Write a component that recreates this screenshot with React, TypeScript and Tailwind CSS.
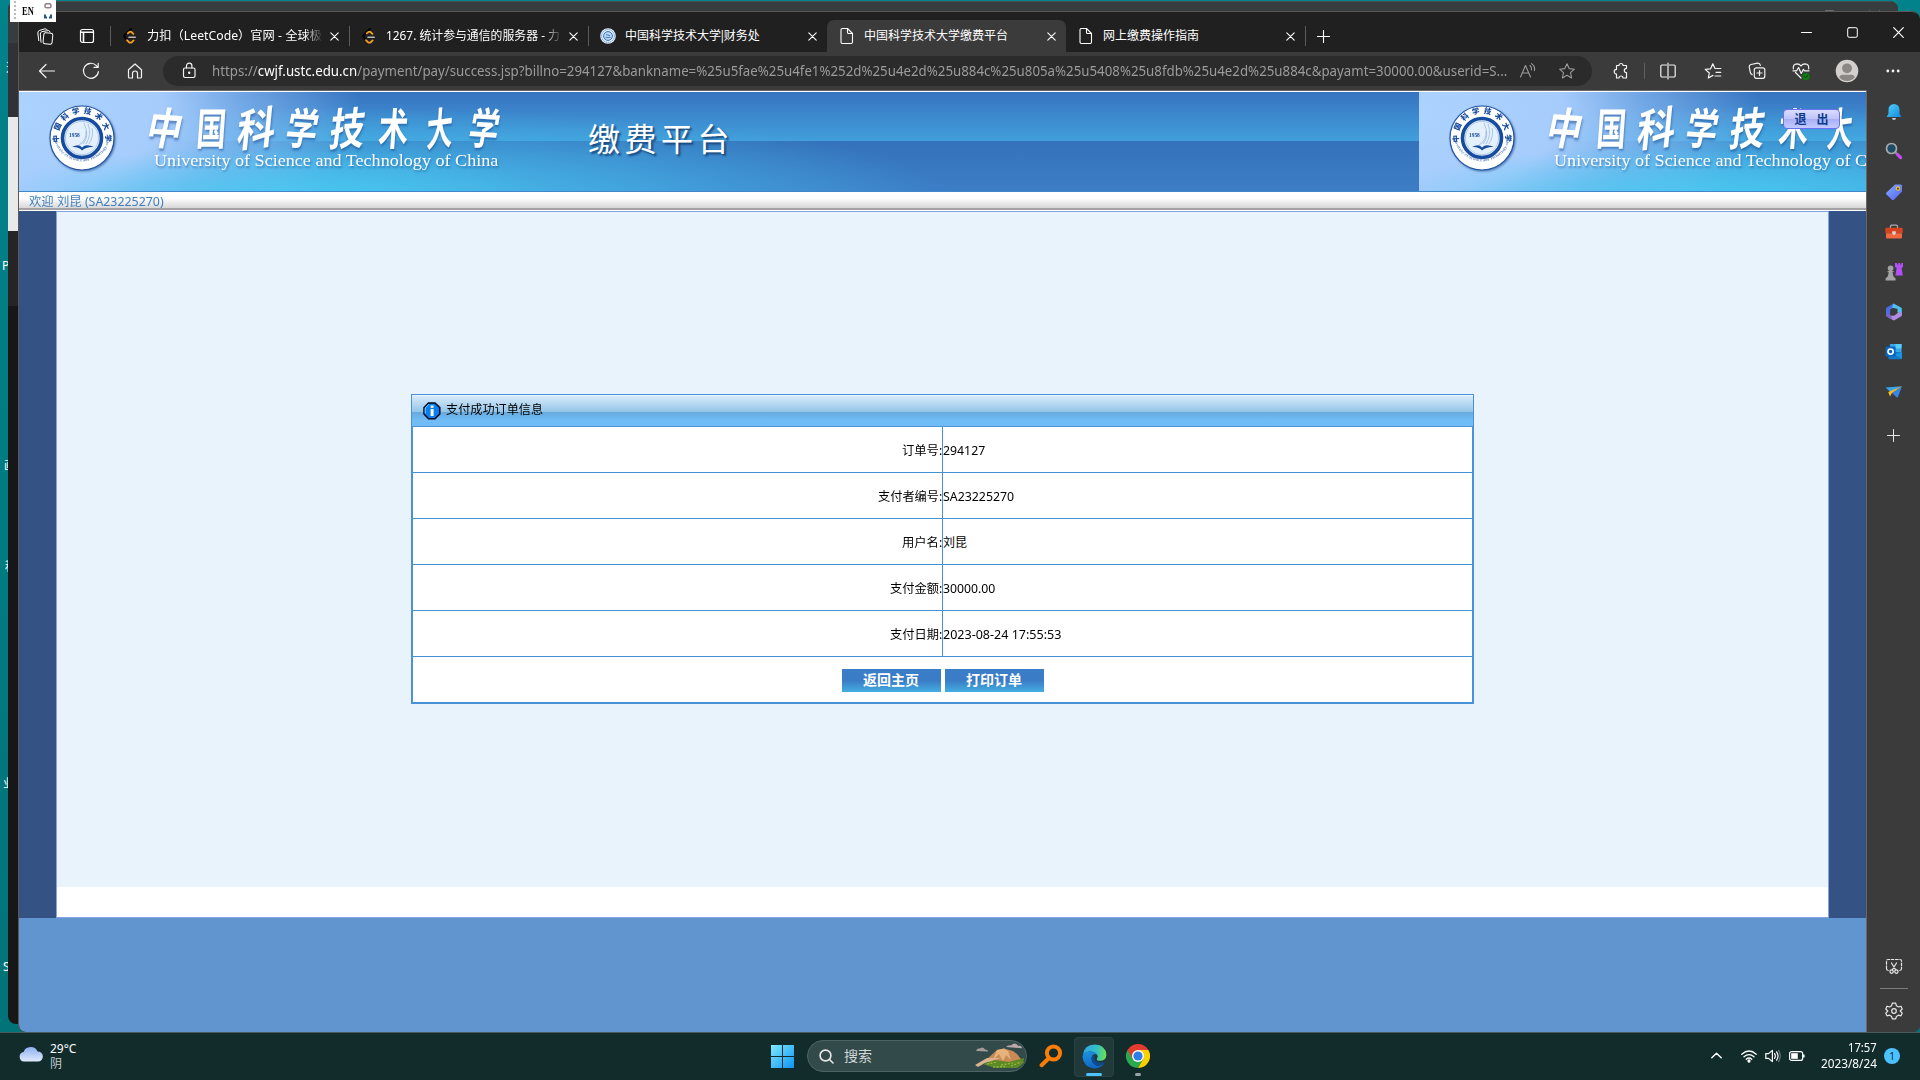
import React, { useLayoutEffect, useRef } from "react";

const ui = "font-['Noto_Sans','Noto_Sans_CJK_SC',sans-serif]";

/** Single-line text condensed or widened to an exact width. */
function Fit({ w, className = "", children }: { w: number; className?: string; children: React.ReactNode }) {
  const ref = useRef<HTMLSpanElement>(null);
  useLayoutEffect(() => {
    const el = ref.current;
    if (el && el.offsetWidth) el.style.transform = `scaleX(${w / el.offsetWidth})`;
  }, [w]);
  return (
    <span className={`inline-block shrink-0 text-left whitespace-nowrap ${className}`} style={{ width: w }}>
      <span ref={ref} className="inline-block origin-left whitespace-nowrap">
        {children}
      </span>
    </span>
  );
}

function Line({ size = 18, vb = 18, sw = 1, className = "", children }: { size?: number; vb?: number; sw?: number; className?: string; children: React.ReactNode }) {
  return (
    <svg width={size} height={size} viewBox={`0 0 ${vb} ${vb}`} fill="none" stroke="currentColor" strokeWidth={sw} strokeLinecap="round" strokeLinejoin="round" className={`shrink-0 ${className}`}>
      {children}
    </svg>
  );
}

const LeetIcon = () => (
  <svg width="16" height="16" viewBox="0 0 16 16" fill="none" strokeLinecap="round">
    <path d="M9 1 L2.8 7 Q1.8 8.2 2.8 9.4 L5 11.8" stroke="#050505" strokeWidth="2.2" />
    <path d="M5.8 5.4 L7.4 4 Q8.4 3.2 9.4 4 L11.4 5.8" stroke="#f5a01d" strokeWidth="1.8" />
    <path d="M5 12.2 L7 14.2 Q8.4 15.2 9.8 14.2 L11.6 12.4" stroke="#f5a01d" strokeWidth="1.8" />
    <path d="M7 9.2 H13.2" stroke="#b9b9b9" strokeWidth="1.6" />
  </svg>
);

const SealMini = () => (
  <svg width="16" height="16" viewBox="0 0 16 16">
    <circle cx="8" cy="8" r="7.8" fill="#e4effa" />
    <circle cx="8" cy="8" r="6.4" fill="none" stroke="#5b93d4" strokeDasharray="1.4 .8" />
    <circle cx="8" cy="8" r="4.4" fill="#bcd7f2" stroke="#2f72c0" strokeWidth="1" />
    <path d="M5.5 9.6 Q7 8.8 8 9.8 Q9 8.8 10.6 9.6 M6 6.6 L10 7.6" stroke="#2f72c0" strokeWidth=".9" fill="none" />
  </svg>
);

const PageIcon = () => (
  <Line size={16} vb={16} sw={1.1} className="text-white">
    <path d="M2 2 a1.5 1.5 0 0 1 1.5 -1.5 H8.5 L13.5 5.5 V14 a1.5 1.5 0 0 1 -1.5 1.5 H3.5 A1.5 1.5 0 0 1 2 14 Z M8.5 .5 V4.5 a1 1 0 0 0 1 1 H13.5" />
  </Line>
);

const tabs = [
  { icon: <LeetIcon />, text: "力扣（LeetCode）官网 - 全球极客", w: 187, fade: true },
  { icon: <LeetIcon />, text: "1267. 统计参与通信的服务器 - 力", w: 174, fade: true },
  { icon: <SealMini />, text: <>中国科学技术大学<span className="-mx-[2px]">|</span>财务处</>, w: 135 },
  { icon: <PageIcon />, text: "中国科学技术大学缴费平台", w: 144, active: true },
  { icon: <PageIcon />, text: "网上缴费操作指南", w: 96 },
];

function TabStrip() {
  return (
    <div className="flex h-[40px] shrink-0 bg-[#202020] text-white">
      <div className="flex w-[91px] items-center pt-[8px] pl-[18px]">
        <Line size={17} vb={17}>
          <rect x="6.5" y="5" width="9" height="11" rx="1.8" transform="rotate(6 11 10)" />
          <path d="M4 14.2 L3.3 6 Q3.3 4.2 5 3.6 L11.5 2.6 Q12.8 2.8 13 4 M1.8 12.6 L.8 5 Q.8 3 2.6 2.4 L8 .8 Q9.6 .8 10.2 1.8" />
        </Line>
        <Line size={16} vb={16} className="ml-[25px]" sw={1.2}>
          <rect x="1.5" y="1.5" width="13" height="13" rx="2" />
          <path d="M2 4.2 H14 M4.5 5 V14" strokeWidth="1.6" />
        </Line>
      </div>
      {tabs.map((t, i) => (
        <div key={i} className={`relative flex h-[32px] w-[239px] items-center self-end ${t.active ? "rounded-t-[7px] bg-[#3b3b3b]" : ""}`}>
          {!t.active && i < 4 && <i className="absolute top-[6px] left-0 h-[20px] w-px bg-[#5c5c5c]" />}
          <span className="ml-[12px]">{t.icon}</span>
          <span className={`ml-[9px] flex h-[20px] w-[175px] items-center overflow-hidden text-[12px] leading-[20px] ${t.fade ? "[mask-image:linear-gradient(90deg,#000_158px,transparent_176px)]" : ""}`}>
            <Fit w={t.w}>{t.text}</Fit>
          </span>
          <Line size={9} vb={9} className="ml-[8px]" sw={1.1}>
            <path d="M.8 .8 L8.2 8.2 M8.2 .8 L.8 8.2" />
          </Line>
        </div>
      ))}
      <div className="mt-[8px] flex h-[32px] w-[60px] items-center">
        <i className="h-[20px] w-px bg-[#5c5c5c]" />
        <Line size={13} vb={13} className="ml-[11px]" sw={1.1}>
          <path d="M6.5 .5 V12.5 M.5 6.5 H12.5" />
        </Line>
      </div>
      <div className="ml-auto flex h-[40px] items-center pr-[16px]">
        <Line size={11} vb={11} className="mr-[35px]"><path d="M.5 5.5 H10.5" /></Line>
        <Line size={11} vb={11} className="mr-[35px]"><rect x=".7" y=".7" width="9.6" height="9.6" rx="1.4" /></Line>
        <Line size={11} vb={11} sw={1.2}><path d="M.7 .7 L10.3 10.3 M10.3 .7 L.7 10.3" /></Line>
      </div>
    </div>
  );
}

function Toolbar() {
  return (
    <div className="flex h-[38px] shrink-0 items-center bg-[#3b3b3b] text-[#f2f2f2]">
      <Line className="ml-[19px]" sw={1.2}><path d="M1.5 9 H16.5 M8 2.5 L1.5 9 L8 15.5" /></Line>
      <Line className="ml-[26px]" sw={1.2}><path d="M16.4 9.6 A7.5 7.5 0 1 1 14.4 3.6 L16 5.3 M16.2 1.3 V5.4 H12" /></Line>
      <Line className="ml-[26px]" sw={1.2}><path d="M2.5 7.8 L9 2 L15.5 7.8 V15 a1 1 0 0 1 -1 1 H11.5 V11.5 a2.5 2.5 0 0 0 -5 0 V16 H3.5 a1 1 0 0 1 -1 -1 Z" /></Line>
      <div className="ml-[19px] flex h-[30px] w-[1429px] items-center rounded-full bg-[#2b2b2b]">
        <Line className="ml-[17px]" sw={1.2}>
          <rect x="3.5" y="6" width="11.5" height="9.5" rx="1.4" />
          <path d="M6.5 6 V3.8 a2.7 2.7 0 0 1 5.4 0 V6" />
          <circle cx="9.2" cy="10.8" r=".6" fill="currentColor" />
        </Line>
        <span className="ml-[14px] text-[14px] leading-[20px] text-[#9b9b9b]">
          <Fit w={1295}>
            https://<span className="text-white">cwjf.ustc.edu.cn</span>
            /payment/pay/success.jsp?billno=294127&amp;bankname=%25u5fae%25u4fe1%252d%25u4e2d%25u884c%25u805a%25u5408%25u8fdb%25u4e2d%25u884c&amp;payamt=30000.00&amp;userid=S...
          </Fit>
        </span>
        <Line className="ml-[12px] text-[#9b9b9b]" sw={1.1}>
          <path d="M1.5 15 L6.5 3.5 L11.5 15 M3.2 11 H9.8 M11 3.5 Q12.8 5 12.4 8 M12.6 1.6 Q16.4 4 15.4 8.6" />
        </Line>
        <Line className="ml-[21px] text-[#9b9b9b]" sw={1.1}>
          <path d="M9 1.8 L11.2 6.6 L16.4 7.2 L12.5 10.7 L13.6 16 L9 13.3 L4.4 16 L5.5 10.7 L1.6 7.2 L6.8 6.6 Z" />
        </Line>
      </div>
      <Line className="ml-[20px]" sw={1.2}>
        <path d="M4.5 3.5 H7 a2 2 0 0 1 4 0 H14.5 V6.3 a2 2 0 0 0 0 4.4 V16 H11 a2 2 0 0 0 -4 0 H4.5 V12 a2.3 2.3 0 1 1 0 -4.6 Z" />
      </Line>
      <i className="ml-[14px] h-[16px] w-px bg-[#5f5f5f]" />
      <Line className="ml-[14px]" sw={1.2}><path d="M7.5 3 H3 a1.2 1.2 0 0 0 -1.2 1.2 V13.8 A1.2 1.2 0 0 0 3 15 H7.5 M10.5 3 H15 a1.2 1.2 0 0 1 1.2 1.2 V13.8 A1.2 1.2 0 0 1 15 15 H10.5 M9 1 V17" /></Line>
      <Line className="ml-[27px]" sw={1.2}><path d="M9 13.4 L4.3 16 L5.3 11 L1.2 7.4 L6.6 6.8 L8.8 1.8 L11 6.5 H16.8 M12 10.3 H16.8 M11 14 H16.8" /></Line>
      <Line className="ml-[26px]" sw={1.2}>
        <rect x="6.3" y="5.8" width="10.5" height="10.5" rx="2" />
        <path d="M11.5 8.5 V13.5 M9 11 H14 M4.2 12.6 Q2.6 12 2.3 10.4 L1.2 5 Q1 3 3 2.5 L9.5 1.2 Q11.8 1 12.4 3.4" />
      </Line>
      <Line className="ml-[26px]" sw={1.2}>
        <path d="M1.3 6.8 Q.8 2 5 1.8 Q7.6 1.8 9 4 Q10.4 1.8 13 1.8 Q17.2 2 16.7 6.8 M3.5 10.5 L9 16 M1 8.8 H4.6 L6.6 5.5 L9.2 11.5 L11.4 7.4 L12.6 8.8 H17" />
        <circle cx="14" cy="14.5" r="3.6" fill="#0f7b10" stroke="none" />
        <path d="M12.4 14.6 L13.6 15.8 L15.8 13.4" stroke="#053a05" strokeWidth="1" />
      </Line>
      <svg width="24" height="24" viewBox="0 0 24 24" className="ml-[25px] shrink-0">
        <circle cx="12" cy="12" r="11.3" fill="#d3d0cd" />
        <circle cx="12" cy="9.3" r="4.9" fill="#8b8886" />
        <path d="M4.3 18.5 Q4.6 15.8 7.5 15.8 H16.5 Q19.4 15.8 19.7 18.5 A10.3 10.3 0 0 1 4.3 18.5Z" fill="#8b8886" />
      </svg>
      <svg width="14" height="4" viewBox="0 0 14 4" fill="#f2f2f2" className="ml-[27px] shrink-0">
        <circle cx="1.8" cy="2" r="1.4" /><circle cx="7" cy="2" r="1.4" /><circle cx="12.2" cy="2" r="1.4" />
      </svg>
    </div>
  );
}

function Seal({ id }: { id: string }) {
  return (
    <svg width="68" height="68" viewBox="0 0 68 68" className="shrink-0 drop-shadow-[1px_1px_1px_rgba(20,60,120,.6)]">
      <defs>
        <path id={`${id}t`} d="M11.5 40 A23.6 23.6 0 1 1 56.5 40" />
        <path id={`${id}b`} d="M5.6 32 A28.6 28.6 0 0 0 62.4 32" />
      </defs>
      <circle cx="34" cy="34" r="32" fill="#fff" stroke="#2355a5" strokeWidth="1.2" />
      <circle cx="34" cy="34" r="19.5" fill="#e9f3fd" stroke="#174ba0" strokeWidth="3.6" />
      <circle cx="34" cy="34" r="16.6" fill="#e4f0fc" stroke="#9dbfe8" strokeWidth=".8" />
      <text fontSize="7.4" fontWeight="900" fill="#174ba0" fontFamily="'Noto Sans CJK SC', sans-serif">
        <textPath href={`#${id}t`} textLength="84" startOffset="2">中国科学技术大学</textPath>
      </text>
      <text fontSize="4.2" fill="#174ba0" fontFamily="'Liberation Serif', serif">
        <textPath href={`#${id}b`} textLength="86" startOffset="2">University of Science and Technology of China</textPath>
      </text>
      <text x="21" y="33" fontSize="5.4" fontWeight="700" fill="#174ba0" fontFamily="'Liberation Serif', serif">1958</text>
      <path d="M24 43 Q31 39.5 34 43.5 Q38 39.5 46 43 Q38 42.5 34 46.5 Q31 42.5 24 43Z" fill="#174ba0" />
      <path d="M35 40 Q42 32 36 19 M38 40 Q44 31 40 20 M41 40 Q46 32 44 24 M31 41 Q39 36 38 27" fill="none" stroke="#8fb2dd" strokeWidth=".7" />
    </svg>
  );
}

const brush = [
  { c: "中", t: "-skew-x-12 rotate-3 scale-x-100" },
  { c: "国", t: "-skew-x-6 scale-x-85" },
  { c: "科", t: "-skew-x-12 -rotate-6 scale-x-110" },
  { c: "学", t: "-skew-x-12 rotate-3 scale-x-90" },
  { c: "技", t: "-skew-x-12 -rotate-3 scale-x-100" },
  { c: "术", t: "-skew-x-6 scale-x-85" },
  { c: "大", t: "-skew-x-12 -rotate-6 scale-x-75" },
  { c: "学", t: "-skew-x-12 rotate-3 scale-x-85" },
];

function Banner({ id }: { id: string }) {
  return (
    <div className="relative flex h-[99px] w-[1400px] shrink-0 bg-[linear-gradient(180deg,#3873c0_0,#419fdb_49px,#3473bb_49px,#3c7dc6_99px)]">
      <div className="absolute inset-0 bg-[radial-gradient(ellipse_640px_95px_at_300px_110px,#47c2ee_0,#45b3e6cc_45%,#3f95d800_100%)]" />
      <div className="absolute inset-0 bg-[radial-gradient(ellipse_340px_190px_at_0_20px,#acd2ff_0,#a6ccfc_42%,#8dbdf5b0_65%,#5a9be000_100%)]" />
      <div className="absolute inset-0 bg-[radial-gradient(ellipse_280px_50px_at_250px_105px,#4ac8f0cc_0,#4ac8f000_100%)]" />
      <div className="relative flex w-full">
        <div className="mt-[12px] ml-[29px]"><Seal id={id} /></div>
        <div className="ml-[32px] w-[366px] text-white [text-shadow:1px_2px_2px_rgba(30,80,150,.55)]">
          <div className="mt-[9px] -ml-[5px] flex h-[50px] origin-center scale-y-125 items-center font-['Noto_Sans_CJK_SC',sans-serif] text-[35px] leading-[50px] font-bold">
            {brush.map(({ c, t }, i) => (
              <span key={i} className={`w-[45.6px] shrink-0 text-center ${t}`}>{c}</span>
            ))}
          </div>
          <div className="ml-[6px] font-['Liberation_Serif',serif] text-[17px] leading-[20px]">
            <Fit w={344}>University of Science and Technology of China</Fit>
          </div>
        </div>
        <div className="mt-[21px] ml-[74px] font-['Noto_Sans_CJK_SC',sans-serif] text-[32px] leading-[48px] tracking-[4.5px] text-white [text-shadow:2px_2px_2px_rgba(15,50,100,.8)]">缴费平台</div>
      </div>
    </div>
  );
}

const rows = [
  ["订单号:", 40, "294127", 42],
  ["支付者编号:", 64, "SA23225270", 71],
  ["用户名:", 40, "刘昆", 24],
  ["支付金额:", 52, "30000.00", 52],
  ["支付日期:", 52, "2023-08-24 17:55:53", 118],
] as const;

function OrderTable() {
  return (
    <div className="flex w-[1063px] flex-col self-start border border-[#4a90d9] text-[12px] text-black">
      <div className="flex h-[31px] items-center border-t border-[#eaf5fe] bg-[linear-gradient(180deg,#d6eafa_0,#93c5e8_16px,#68aadc_16px,#70bcf7_24px,#70bcf7_100%)] pl-[11px]">
        <svg width="18" height="18" viewBox="0 0 18 18">
          <path d="M5.5 1 H12 L16.8 5.5 V12 L12 16.8 H5.5 L1 12 V5.5Z" fill="#0a7df0" stroke="#00081c" strokeWidth="1.5" />
          <path d="M6 2.2 L2.2 6 V11.5" stroke="#8fd0ff" fill="none" />
          <path d="M7.6 3.4h3v2.4h-3z M7.6 7h3v7h-3z" fill="#fff" />
        </svg>
        <span className="-mt-[2px] ml-[5px]"><Fit w={97}>支付成功订单信息</Fit></span>
      </div>
      <div className="flex flex-col border border-[#4a94d8] bg-white">
        {rows.map(([k, kw, v, vw]) => (
          <div key={k} className="flex h-[46px] items-stretch border-b border-[#4492d3] leading-[47px]">
            <div className="w-[530px] border-r border-[#4492d3] text-right"><Fit w={kw}>{k}</Fit></div>
            <div className="flex-1"><Fit w={vw}>{v}</Fit></div>
          </div>
        ))}
        <div className="flex h-[45px] justify-center gap-[4px] pt-[12px]">
          {["返回主页", "打印订单"].map((b) => (
            <button key={b} className="h-[23px] w-[99px] bg-[linear-gradient(180deg,#3a7dc8_0,#3a7cc6_50%,#43aee2_100%)] pb-px text-center text-[14px] leading-[20px] font-bold text-white">{b}</button>
          ))}
        </div>
      </div>
    </div>
  );
}

function WebPage() {
  return (
    <div className="flex w-[1848px] shrink-0 flex-col overflow-hidden rounded-bl-[7px] border-r border-[#6b6663] bg-[#6195cf]">
      <div className="h-px shrink-0 bg-[#6b6663]" />
      <div className="h-px shrink-0 bg-white" />
      <div className="relative flex h-[99px] shrink-0 overflow-hidden">
        <Banner id="a" />
        <Banner id="b" />
        <div className="absolute top-[17px] left-[1764px] flex h-[20px] w-[57px] items-center justify-center gap-[10px] rounded-[4px] border border-[#6a70f0] bg-[linear-gradient(180deg,#d9dcff_0,#bfc3fa_50%,#a9aff5_50%,#c3caff_100%)] font-['Noto_Sans_CJK_SC',sans-serif] text-[12px] font-bold text-[#0b3a8f]">
          <span>退</span><span>出</span>
        </div>
      </div>
      <div className="flex h-[19px] shrink-0 items-center border-t border-b-2 border-t-[#3f86cd] border-b-[#a3a3a3] bg-[linear-gradient(180deg,#fff_0,#fdfdfd_40%,#d8d8d8_100%)] pt-[3px] pl-[10px] text-[12px] leading-[14px] text-[#3f7fc0]">
        <Fit w={135}>欢迎 刘昆 (SA23225270)</Fit>
      </div>
      <div className="h-px shrink-0 bg-white" />
      <div className="flex h-[707px] shrink-0 bg-[#345384]">
        <div className="ml-[37px] flex w-[1773px] flex-col border border-[#86a3e4] bg-white">
          <div className="flex h-[675px] justify-center bg-[#e8f3fc] pt-[182px]"><OrderTable /></div>
        </div>
      </div>
    </div>
  );
}

const sideIcons = [
  <svg key="bell" width="18" height="18" viewBox="0 0 18 18"><defs><linearGradient id="bl" x1="0" y1="0" x2="1" y2="1"><stop stopColor="#4fd4fb" /><stop offset="1" stopColor="#1487dc" /></linearGradient></defs><path d="M9 1 a5.5 5.5 0 0 1 5.5 5.5 V10.5 L16.3 14 H1.7 L3.5 10.5 V6.5 A5.5 5.5 0 0 1 9 1Z" fill="url(#bl)" /><path d="M7 15 h4 a2 2 0 0 1 -4 0" fill="#c8c8c8" /></svg>,
  <svg key="find" width="18" height="18" viewBox="0 0 18 18" className="-mt-[2px]"><circle cx="6.5" cy="6.5" r="5" fill="#1d4d66" stroke="#aaa" strokeWidth="1.7" /><path d="M10.5 10.5 L12 12" stroke="#999" strokeWidth="2" /><path d="M12.4 12.4 L15.6 15.6" stroke="#c44df5" strokeWidth="3.2" strokeLinecap="round" /></svg>,
  <svg key="tag" width="18" height="18" viewBox="0 0 18 18"><defs><linearGradient id="tg" x1="0" y1="0" x2="1" y2="1"><stop stopColor="#7fb2ff" /><stop offset="1" stopColor="#5a5cf0" /></linearGradient></defs><path d="M10 1.5 H16 L17 2.5 V8.5 L9 16.8 Q8 17.5 7 16.8 L1.5 11.5 Q.6 10.4 1.5 9.4Z" fill="url(#tg)" /><circle cx="13" cy="5.6" r="1.7" fill="#4b4a5c" stroke="#f0c419" strokeWidth="1.1" /></svg>,
  <svg key="box" width="18" height="18" viewBox="0 0 18 18"><path d="M5.5 5 V3.4 Q5.5 2.2 6.8 2.2 H11.2 Q12.5 2.2 12.5 3.4 V5" fill="none" stroke="#aaa" strokeWidth="1.3" /><rect x=".3" y="4.8" width="17.4" height="5.4" rx="1" fill="#d8431f" /><path d="M1 10.2 H17 V14.6 Q17 15.6 16 15.6 H2 Q1 15.6 1 14.6Z" fill="#f1683f" /><path d="M7.2 8.3 h3.6 v2.4 L9 12.3 L7.2 10.7Z" fill="#d5d5d5" /></svg>,
  <svg key="chess" width="18" height="18" viewBox="0 0 18 18"><path d="M10 0 h2 v1.5 h1.2 V0 h1.8 v1.5 h1.2 V0 H18 V4 L16.6 5 L17.8 12.5 H10.4 L11.6 5 L10 4Z" fill="#b24ff5" /><circle cx="5.6" cy="5.3" r="2.8" fill="#a3a3a3" /><path d="M2.6 8 H8.6 V9.3 H7.4 L8.4 13.3 L10.6 15.5 V17.5 H.6 V15.5 L2.8 13.3 L3.8 9.3 H2.6Z" fill="#a3a3a3" /></svg>,
  <svg key="m365" width="18" height="18" viewBox="0 0 18 18"><path d="M8.5 .5 L1 5 V13 L5 15.4 L5.2 6.5 L12 3Z" fill="#4a6ee0" /><path d="M8.5 .5 L16.8 5 V12 L12.4 9.2 L12.6 6 L7 4.6Z" fill="#4fc0ee" /><path d="M16.8 9.5 V13 L9 17.6 L4.5 15.2 L2.4 13 L9.5 12.6 L14 9Z" fill="#b08be0" /><path d="M1 10 V13 L7 16.6 L6 12.3Z" fill="#7b63c9" /></svg>,
  <svg key="ol" width="18" height="18" viewBox="0 0 18 18"><rect x="5" y="1" width="11.5" height="9" fill="#37a9ea" /><path d="M10.5 1 h6 v4.5 h-6z" fill="#56d0fb" /><path d="M3.5 9 H17 V15 Q17 16.2 15.8 16.2 H4.7 Q3.5 16.2 3.5 15Z" fill="#1479c9" /><path d="M17 9 V16 L9.5 11.5Z" fill="#1b93e0" /><rect x=".6" y="3.6" width="10" height="10" rx="1" fill="#0a66bd" /><circle cx="5.6" cy="8.6" r="2.6" fill="none" stroke="#fff" strokeWidth="1.6" /></svg>,
  <svg key="drop" width="18" height="18" viewBox="0 0 18 18"><path d="M.5 4.6 L17 3.3 L5.5 9Z" fill="#35a5ee" /><path d="M17 3.3 L12.5 15 L7 10Z" fill="#3585ec" /><path d="M17 3.3 L3.2 9 L5 13.4 L7 10Z" fill="#f8bd1c" /></svg>,
];

function Sidebar() {
  return (
    <div className="flex flex-1 flex-col items-center bg-[#3b3b3b] pt-[2px] text-[#e6e6e6]">
      {sideIcons.map((s, i) => (
        <div key={i} className="flex h-[40px] items-center">{s}</div>
      ))}
      <div className="flex h-[46px] items-center"><Line size={13} vb={13}><path d="M6.5 .5 V12.5 M.5 6.5 H12.5" /></Line></div>
      <div className="mt-auto flex flex-col items-center">
        <Line size={18} sw={1.2}>
          <path d="M1.5 11.5 V4 Q1.5 2.5 3 2.5 H15 Q16.5 2.5 16.5 4 V11.5 M1.5 11.5 Q1.5 13.5 3.5 13.5 M16.5 11.5 Q16.5 13.5 14.5 13.5" strokeDasharray="2.6 1.7" />
          <path d="M6.5 6 L10.8 13 M11.5 6 L7.2 13" />
          <circle cx="6.6" cy="14.6" r="1.7" /><circle cx="11.4" cy="14.6" r="1.7" />
        </Line>
        <i className="mt-[13px] h-px w-[28px] bg-[#7c7c7c]" />
        <Line size={18} sw={1.2} className="mt-[13px] mb-[12px]">
          <path d="M7.3 1.2 H10.7 L11.4 3.8 L13.6 5 L16 4.2 L17.2 7 L15.2 9 L17.2 11.2 L16 13.8 L13.4 13.2 L11.4 14.4 L10.7 16.8 H7.3 L6.6 14.4 L4.6 13.2 L2 13.8 L.8 11.2 L2.8 9 L.8 7 L2 4.2 L4.6 5 L6.6 3.8Z" />
          <circle cx="9" cy="9" r="2.3" />
        </Line>
      </div>
    </div>
  );
}

const EdgeIcon = () => (
  <svg width="25" height="25" viewBox="0 0 25 25" className="-mt-px">
    <defs>
      <linearGradient id="e1" x1="0" y1=".4" x2="1" y2=".5"><stop stopColor="#2aa6e8" /><stop offset=".6" stopColor="#35c1c0" /><stop offset="1" stopColor="#6be34d" /></linearGradient>
      <linearGradient id="e2" x1="0" y1="0" x2=".4" y2="1"><stop stopColor="#1c95e0" /><stop offset="1" stopColor="#1066c4" /></linearGradient>
    </defs>
    <path d="M.8 11 Q2 .6 12.8 .5 Q24 1 24.4 11 Q24 16.8 18 16.8 Q13.8 16.6 15 14.4 Q16.6 12.6 15 10.6 Q12 7 7 7.6 Q3 8 .8 11Z" fill="url(#e1)" />
    <path d="M.5 12.5 Q2 7.6 7.6 7.5 Q12.6 7.3 15 10.6 Q10.8 9.4 9.6 13.5 Q9 19 14.5 21.5 Q18.5 22.8 22.6 19 Q18.6 25 11.6 24.4 Q1.4 23 .5 12.5Z" fill="url(#e2)" />
    <path d="M9.6 13.5 Q8.8 19 14.5 21.5 Q18.8 22.8 22.8 18.6 Q23 17.6 22 18 Q18.5 19.6 15 18 Q11.4 16 12.6 11.6 Q10.4 11.4 9.6 13.5Z" fill="#0c4a94" />
  </svg>
);

const ChromeIcon = () => (
  <svg width="24" height="24" viewBox="0 0 24 24" className="-mt-px">
    <path d="M12 12 L1.6 6 A12 12 0 0 0 12 24 L17.2 15Z" fill="#2da94f" />
    <path d="M12 12 L17.2 15 L12 24 A12 12 0 0 0 22.4 6 H12Z" fill="#fdd000" />
    <path d="M12 6 H22.4 A12 12 0 0 0 1.6 6 L6.8 15 Z" fill="#e33b2e" />
    <circle cx="12" cy="12" r="6" fill="#fff" />
    <circle cx="12" cy="12" r="4.6" fill="#2f7de9" />
  </svg>
);

function Taskbar() {
  return (
    <div className="absolute inset-x-0 bottom-0 flex h-[48px] items-center border-t border-[#4a5a5a] bg-[#122c2c] text-white">
      <div className="flex w-[771px] items-center pl-[19px]">
        <svg width="24" height="16" viewBox="0 0 24 16" className="-mt-[6px]">
          <defs><linearGradient id="cl" x1="0" y1="0" x2="0" y2="1"><stop stopColor="#8eb0f2" /><stop offset="1" stopColor="#dfe9fb" /></linearGradient></defs>
          <path d="M5 15.5 A4.8 4.8 0 0 1 4.6 6 A7.6 7.6 0 0 1 18.6 5.4 A5 5 0 0 1 19 15.5Z" fill="url(#cl)" />
        </svg>
        <div className="-mt-[2px] ml-[7px] flex flex-col text-[12px] leading-[15px]"><Fit w={26}>29°C</Fit><span className="text-[#c4cdcd]">阴</span></div>
      </div>
      <svg width="23" height="23" viewBox="0 0 23 23">
        <defs><linearGradient id="wn" x1="0" y1="0" x2="1" y2="1"><stop stopColor="#7eeaff" /><stop offset="1" stopColor="#0f92f5" /></linearGradient></defs>
        <path d="M0 0h11v11H0z M12 0h11v11H12z M0 12h11v11H0z M12 12h11v11H12z" fill="url(#wn)" />
      </svg>
      <div className="-mt-px ml-[13px] flex h-[32px] w-[220px] items-center rounded-full border border-[#4f6363] bg-[#334a4a] pr-px pl-[11px]">
        <Line size={15} vb={15} sw={1.6} className="text-[#e8e8e8]"><circle cx="6.5" cy="6.5" r="5.4" /><path d="M10.5 10.5 L14 14" /></Line>
        <span className="-mt-px ml-[10px] text-[14px] leading-[20px] text-[#d0d7d7]">搜索</span>
        <svg width="50" height="26" viewBox="0 0 50 26" className="ml-auto">
          <path d="M1 8 q1-3 4-2.6 q3-2.4 5 1 q3 0 3 2z" fill="#a79a9c" />
          <path d="M31 4 q2-2.4 5-1.6 q4-4 7 .4 q4-.6 4 2.4z" fill="#b9a9a8" />
          <path d="M12 16 L22 7 L29 5.5 L38 8 L42 11 L49 20 L35 22 L15 20Z" fill="#c98a55" />
          <path d="M22 7 L29 5.5 L33 8 L36 17 L31 12 L28 18 L24 11 L18 17Z" fill="#e7b37d" />
          <path d="M0 22 L12 15 L26 15 L10 20 L3 24Z" fill="#d9b48c" />
          <path d="M8 21 L20 17 L34 19 L49 15 Q49 22 42 25 H20Z" fill="#5c8a26" />
          <path d="M12 21 L22 19 M26 22 L38 20 M18 24 L30 23.6 M36 23 L46 19" stroke="#a3b93a" strokeWidth="1.2" strokeDasharray="2 1.5" />
        </svg>
      </div>
      <svg width="24" height="24" viewBox="0 0 24 24" className="-mt-px ml-[12px]"><circle cx="14.5" cy="9" r="6.6" fill="none" stroke="#fb7d08" strokeWidth="4" /><path d="M9.5 14.5 L2.6 21.2" stroke="#fb7d08" strokeWidth="4" strokeLinecap="round" /></svg>
      <div className="relative ml-[11px] flex h-[40px] w-[40px] items-center justify-center rounded-[4px] border border-[#2a4242] bg-[#213939]">
        <EdgeIcon />
        <i className="absolute bottom-0 left-[11px] h-[3px] w-[16px] rounded-full bg-[#4cc2ff]" />
      </div>
      <div className="relative ml-[4px] flex h-[40px] w-[40px] items-center justify-center">
        <ChromeIcon />
        <i className="absolute bottom-px left-[17px] h-[3px] w-[6px] rounded-full bg-[#9aa3a3]" />
      </div>
      <div className="-mt-[2px] ml-auto flex items-center pr-[20px]">
        <Line size={11} vb={11} sw={1.4} className="mr-px"><path d="M.8 7.8 L5.5 3.2 L10.2 7.8" /></Line>
        <Line size={16} vb={16} sw={1.3} className="ml-[18px]"><path d="M.8 6.2 Q8 -.2 15.2 6.2 M3 8.8 Q8 4.4 13 8.8 M5.2 11.2 Q8 8.8 10.8 11.2" /><circle cx="8" cy="13" r="1" fill="currentColor" /></Line>
        <Line size={16} vb={16} sw={1.2} className="ml-[8px]"><path d="M.8 5.6 H3.6 L7.4 2.4 V13.6 L3.6 10.4 H.8Z M9.6 5.6 Q11 8 9.6 10.4 M11.6 3.8 Q14.4 8 11.6 12.2" /><path d="M13.6 2.4 Q17 8 13.6 13.6" opacity=".35" /></Line>
        <svg width="16" height="10" viewBox="0 0 16 10" className="ml-[8px]"><rect x=".6" y=".6" width="13" height="8.8" rx="2" fill="none" stroke="#fff" strokeWidth="1.2" /><rect x="2.2" y="2.2" width="6.6" height="5.6" fill="#fff" /><path d="M14.8 3.4 V6.6" stroke="#fff" strokeWidth="1.6" /></svg>
        <div className="ml-[16px] flex flex-col items-end text-[12px] leading-[16px]"><Fit w={29}>17:57</Fit><Fit w={56}>2023/8/24</Fit></div>
        <span className="ml-[7px] h-[16px] w-[16px] rounded-full bg-[#4cc2ff] text-center text-[10px] leading-[16px] text-[#0c2b3c]">1</span>
      </div>
    </div>
  );
}

export default function App() {
  return (
    <div className={`relative h-[1080px] w-[1920px] overflow-hidden bg-[linear-gradient(180deg,#02828a,#017378)] ${ui}`}>
      <div className="absolute top-0 left-0 h-[1032px] w-[12px] text-[12px] leading-[16px] text-white">
        <span className="absolute top-[60px] left-[6px]">迅</span>
        <span className="absolute top-[258px] left-[2px]">P</span>
        <span className="absolute top-[458px] left-[4px]">画</span>
        <span className="absolute top-[559px] left-[5px]">程</span>
        <span className="absolute top-[776px] left-[3px]">业</span>
        <span className="absolute top-[959px] left-[3px]">S</span>
      </div>
      <div className="absolute top-px left-[8px] flex h-[1023px] w-[1890px] flex-col overflow-hidden rounded-[8px] border-t border-[#46504f] bg-[#171717]">
        <div className="flex h-[41px] shrink-0 justify-end gap-[34px] bg-[#373c3f] pt-[8px] pr-[18px] text-[#777]">
          <Line size={11} vb={11}><rect x=".7" y=".7" width="9.6" height="9.6" rx="1.4" /></Line>
          <Line size={11} vb={11}><path d="M.7 .7 L10.3 10.3 M10.3 .7 L.7 10.3" /></Line>
        </div>
        <div className="h-[74px] shrink-0 bg-[#313236]" />
        <div className="h-[114px] shrink-0 bg-[#e9e9e9]" />
        <div className="h-[75px] shrink-0 bg-[#252525]" />
      </div>
      <div className="absolute top-[11px] left-[18px] flex h-[1021px] w-[1902px] flex-col overflow-hidden rounded-t-[8px] rounded-b-[7px] border-t border-l border-[#5b5755]">
        <TabStrip />
        <Toolbar />
        <div className="flex min-h-0 flex-1 bg-[#3b3b3b]">
          <WebPage />
          <Sidebar />
        </div>
      </div>
      <div className="absolute top-0 left-[10px] flex h-[22px] w-[46px] items-center bg-white text-black">
        <i className="ml-[4px] h-[20px] w-[2px] bg-[repeating-linear-gradient(180deg,#bbb_0,#bbb_2px,transparent_2px,transparent_4px)]" />
        <span className="ml-[6px] font-['Liberation_Serif',serif] text-[12px] leading-[22px] font-bold"><Fit w={12}>EN</Fit></span>
        <svg width="8" height="16" viewBox="0 0 8 16" className="ml-[10px]" fill="none" strokeWidth="1.5">
          <rect x="1" y=".8" width="6" height="4" rx="1.6" stroke="#8d7f86" />
          <path d="M1 11.5 V14.6 H3 M7 11.5 V14.6 H5" stroke="#27528e" strokeWidth="2" />
        </svg>
      </div>
      <Taskbar />
    </div>
  );
}
